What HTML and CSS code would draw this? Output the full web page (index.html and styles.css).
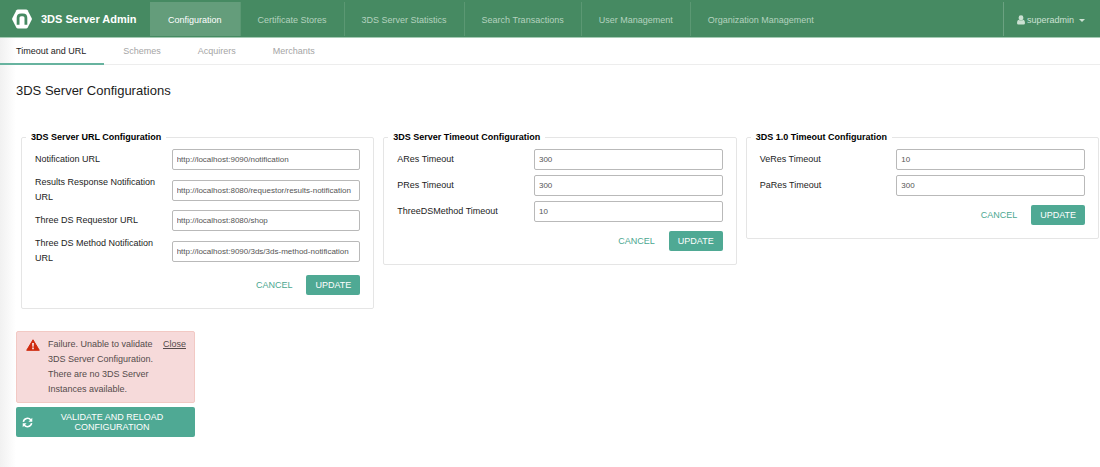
FILE: index.html
```html
<!DOCTYPE html>
<html lang="en">
<head>
<meta charset="utf-8">
<title>3DS Server Admin</title>
<link rel="stylesheet" href="styles.css">
</head>
<body>
<header class="topbar">
  <a class="brand" href="#">
    <svg class="brand-logo" viewBox="0 0 20 20" aria-hidden="true">
      <path fill="#fff" d="M4.400 1.300Q4.900 .6 5.800 .6h8.400q.9 0 1.400.7l4 7.700q.5 1 0 2l-4 7.700q-.5.7-1.400.7H5.800q-.9 0-1.400-.7L.4 11q-.5-1 0-2z"/>
      <path fill="none" stroke="#468a62" stroke-width="2.800" d="M6.100 15.800V8.800q0-3 3-3h1.800q3 0 3 3v7"/>
    </svg>
    <span>3DS Server Admin</span>
  </a>
  <nav class="main-nav" aria-label="Main">
    <a class="nav-item nav-item-active" href="#">Configuration</a>
    <a class="nav-item" href="#">Certificate Stores</a>
    <a class="nav-item" href="#">3DS Server Statistics</a>
    <a class="nav-item" href="#">Search Transactions</a>
    <a class="nav-item" href="#">User Management</a>
    <a class="nav-item" href="#">Organization Management</a>
  </nav>
  <button class="user-menu" type="button">
    <svg class="user-icon" viewBox="0 0 8 10" aria-hidden="true"><path fill="currentColor" d="M4 .3a2.4 2.4 0 0 1 2.4 2.4C6.4 4.2 5.400 5.400 4 5.400S1.600 4.200 1.600 2.700A2.400 2.400 0 0 1 4 .3zM1.700 4.800Q4 6.900 6.300 4.800 8 5.300 8 8q0 1.500-1.400 1.500H1.400Q0 9.500 0 8q0-2.700 1.700-3.200z"/></svg>
    <span>superadmin</span>
    <span class="caret"></span>
  </button>
</header>

<nav class="tabs" aria-label="Configuration">
  <a class="tab tab-active" href="#">Timeout and URL</a>
  <a class="tab" href="#">Schemes</a>
  <a class="tab" href="#">Acquirers</a>
  <a class="tab" href="#">Merchants</a>
</nav>

<main class="content">
  <h1 class="page-title">3DS Server Configurations</h1>

  <div class="panels">
    <form>
      <fieldset class="panel">
        <legend class="panel-title">3DS Server URL Configuration</legend>
        <div class="row"><label for="notification">Notification URL</label><input class="field" id="notification" type="text" value="http://localhost:9090/notification"></div>
        <div class="row"><label for="results">Results Response Notification URL</label><input class="field" id="results" type="text" value="http://localhost:8080/requestor/results-notification"></div>
        <div class="row"><label for="requestor">Three DS Requestor URL</label><input class="field" id="requestor" type="text" value="http://localhost:8080/shop"></div>
        <div class="row"><label for="method">Three DS Method Notification URL</label><input class="field" id="method" type="text" value="http://localhost:9090/3ds/3ds-method-notification"></div>
        <div class="actions"><button class="btn-text" type="button">CANCEL</button><button class="btn" type="button">UPDATE</button></div>
      </fieldset>
    </form>
    <form>
      <fieldset class="panel">
        <legend class="panel-title">3DS Server Timeout Configuration</legend>
        <div class="row"><label for="ares">ARes Timeout</label><input class="field" id="ares" type="text" value="300"></div>
        <div class="row"><label for="pres">PRes Timeout</label><input class="field" id="pres" type="text" value="300"></div>
        <div class="row"><label for="tdsmethod">ThreeDSMethod Timeout</label><input class="field" id="tdsmethod" type="text" value="10"></div>
        <div class="actions"><button class="btn-text" type="button">CANCEL</button><button class="btn" type="button">UPDATE</button></div>
      </fieldset>
    </form>
    <form>
      <fieldset class="panel">
        <legend class="panel-title">3DS 1.0 Timeout Configuration</legend>
        <div class="row"><label for="veres">VeRes Timeout</label><input class="field" id="veres" type="text" value="10"></div>
        <div class="row"><label for="pares">PaRes Timeout</label><input class="field" id="pares" type="text" value="300"></div>
        <div class="actions"><button class="btn-text" type="button">CANCEL</button><button class="btn" type="button">UPDATE</button></div>
      </fieldset>
    </form>
  </div>

  <section class="validation">
    <div class="alert" role="alert">
      <svg class="alert-icon" viewBox="0 0 14 12" aria-hidden="true">
        <path fill="#cf2a0e" stroke="#cf2a0e" stroke-linejoin="round" d="M7 .8L13.300 11.300H.7z"/>
        <path fill="#f6dada" d="M6 3.900h2L7.700 7.700H6.300zM6.100 8.500h1.800V10.200H6.100z"/>
      </svg>
      <p class="alert-text">Failure. Unable to validate 3DS Server Configuration. There are no 3DS Server Instances available.</p>
      <button class="alert-close" type="button">Close</button>
    </div>
    <button class="btn btn-reload" type="button">
      <svg class="reload-icon" viewBox="0 0 12 12" aria-hidden="true">
        <path fill="none" stroke="#fff" stroke-width="1.700" d="M1.500 5.200A4.500 4.500 0 0 1 9.600 3.300M10.500 6.800A4.500 4.500 0 0 1 2.400 8.700"/>
        <path fill="#fff" d="M11.200 .9v4.200H7zM.8 11.100V6.900H5z"/>
      </svg>
      <span class="reload-label">VALIDATE AND RELOAD CONFIGURATION</span>
    </button>
  </section>
</main>
</body>
</html>
```
FILE: styles.css
```css
* {
  box-sizing: border-box;
}

body {
  margin: 0;
  min-height: 100vh;
  background: linear-gradient(to right, #f1f1f1, #ffffff 16px);
  color: #1c1c1c;
  font: 9px/15px "Liberation Sans", Arial, sans-serif;
}

a {
  color: inherit;
  text-decoration: none;
}

button,
input {
  font: inherit;
}

button {
  margin: 0;
  padding: 0;
  border: 0;
  background: none;
  cursor: pointer;
}

.topbar {
  display: flex;
  height: 38px;
  padding: 2px 0 1px;
  border-bottom: 1px solid #a5cbb4;
  background: #468a62;
  color: #b4d2bf;
}

.brand {
  display: flex;
  align-items: center;
  gap: 9px;
  width: 150px;
  padding-left: 12px;
  color: #ffffff;
  font-size: 11px;
  font-weight: bold;
}

.brand-logo {
  width: 20px;
  height: 20px;
}

.main-nav {
  display: flex;
  flex: 1;
}

.nav-item {
  display: flex;
  align-items: center;
  padding: 2px 18px 0;
}

.nav-item + .nav-item {
  padding: 2px 17px 0;
  border-left: 1px solid #5b9873;
}

.nav-item-active {
  background: #649d7b;
  color: #ffffff;
}

.user-menu {
  display: flex;
  align-items: center;
  gap: 2px;
  padding: 2px 15px 0 13px;
  border-left: 1px solid #6ba281;
  color: #cce1d3;
}

.user-icon {
  width: 8px;
  height: 10px;
}

.caret {
  margin-left: 3px;
  border: 3px solid transparent;
  border-top-color: currentColor;
  border-bottom: 0;
}

.tabs {
  display: flex;
  border-bottom: 1px solid #ededed;
  color: #a5a5a5;
}

.tab {
  margin-bottom: -1px;
  padding: 6px 18px 4px 19px;
  border-bottom: 2px solid transparent;
}

.tab-active {
  padding-left: 16px;
  border-color: #67b39f;
  color: #1c1c1c;
}

.content {
  padding: 17px 1px 16px 16px;
}

.page-title {
  margin: 0;
  font-size: 13px;
  font-weight: normal;
  line-height: 18px;
}

.panels {
  display: grid;
  grid-template-columns: repeat(3, minmax(0, 1fr));
  align-items: start;
  gap: 9px;
  padding: 30px 0 0 5px;
}

.panel {
  min-width: 0;
  margin: 0;
  padding: 4px 13px 13px;
  border: 1px solid #e5e5e5;
  border-radius: 2px;
}

.panel-title {
  margin-left: -9px;
  padding: 0 5px;
  color: #000000;
  font-weight: bold;
}

.row {
  display: grid;
  grid-template-columns: 42fr 58fr;
  align-items: center;
  margin-bottom: 5px;
}

.row label {
  padding-right: 14px;
}

.field {
  width: 100%;
  height: 21px;
  padding: 0 4px;
  border: 1px solid #b9b9b9;
  border-radius: 2px;
  background: #ffffff;
  color: #555555;
  font-size: 8px;
}

.actions {
  display: flex;
  justify-content: flex-end;
  gap: 14px;
  padding-top: 4px;
}

.btn-text {
  color: #4ba790;
}

.btn {
  padding: 3px 9px 2px;
  border-radius: 2px;
  background: #4fa994;
  color: #ffffff;
}

.validation {
  display: grid;
  gap: 4px;
  width: 179px;
  max-width: 100%;
  margin-top: 22px;
}

.alert {
  display: flex;
  align-items: flex-start;
  padding: 5px 8px 5px 9px;
  border: 1px solid #f2c9c4;
  border-radius: 2px;
  background: #f6dada;
  color: #554b4b;
}

.alert-icon {
  flex: none;
  width: 14px;
  height: 12px;
  margin: 2px 8px 0 0;
}

.alert-text {
  flex: 1;
  margin: 0;
}

.alert-close {
  color: inherit;
  text-decoration: underline;
}

.btn-reload {
  display: flex;
  align-items: center;
  padding: 5px 6px;
  line-height: 10px;
}

.reload-icon {
  flex: none;
  width: 11px;
  height: 11px;
}

.reload-label {
  flex: 1;
  padding: 0 20px 0 22px;
  text-align: center;
}
```
